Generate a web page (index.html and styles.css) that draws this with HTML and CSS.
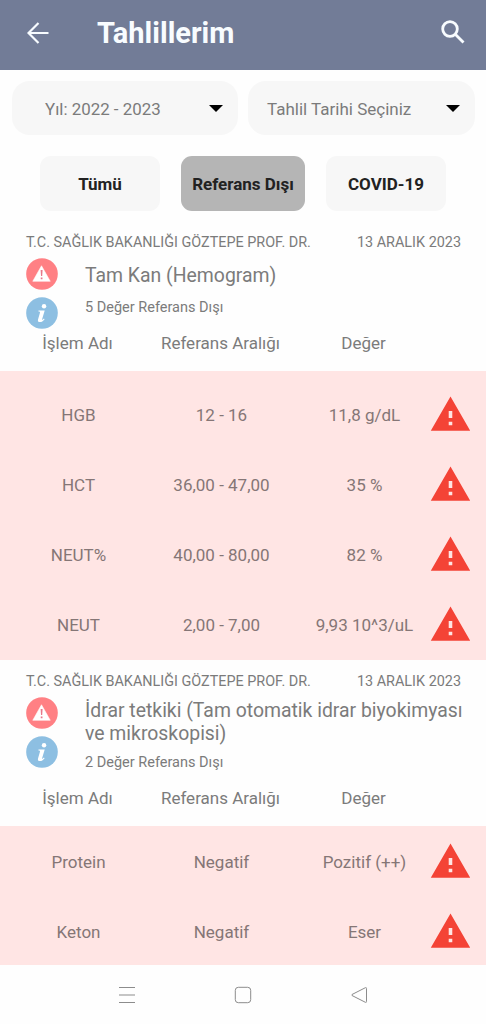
FILE: index.html
```html
<!DOCTYPE html>
<html lang="tr">
<head>
  <meta charset="UTF-8">
  <meta name="viewport" content="width=device-width, initial-scale=1.0">
  <title>Tahlillerim</title>
  <link rel="stylesheet" href="styles.css">
</head>
<body>
  <!-- shared icons -->
  <svg class="sprite" width="0" height="0">
    <symbol id="warning" viewBox="0 0 24 24">
      <path d="M1 21h22L12 2 1 21zm12-3h-2v-2h2v2zm0-4h-2v-4h2v4z"/>
    </symbol>
    <symbol id="badgeWarning" viewBox="0 0 33 33">
      <circle cx="16.5" cy="16.5" r="16.3" fill="#ff8084"/>
      <path d="M16 8 25 24H7z" fill="#fff" stroke="#fff" stroke-width=".6" stroke-linejoin="round"/>
      <path d="M15.1 12.5h2l-.4 6h-1.2zM15.2 20h1.8v1.8h-1.800z" fill="#e8788a"/>
    </symbol>
    <symbol id="badgeInfo" viewBox="0 0 33 33">
      <circle cx="16.5" cy="16.5" r="16.3" fill="#8dbfe2"/>
      <circle cx="18.6" cy="9.6" r="2.3" fill="#fff"/>
      <path d="M12.9 13.800h6.400l-2.700 9.200c-.2.9.5.8 1.9-.7l.7.6c-1.600 2.200-3.200 3-4.800 3-1.700 0-2.500-1-2-2.700l2-7c.2-.9-.3-1.200-1.600-1.300z" fill="#fff"/>
    </symbol>
  </svg>

  <header class="app-bar">
    <svg class="back" viewBox="0 0 22 22"><path d="M21.5 11H2M11.5 1 1.5 11l10 10"/></svg>
    <h1>Tahlillerim</h1>
    <svg class="search" viewBox="0 0 24 24"><circle cx="9" cy="9" r="7.3"/><path d="m14.5 14.5 8 8"/></svg>
  </header>

  <main>
    <div class="filters">
      <div class="select year"><span>Yıl: 2022 - 2023</span><i class="caret"></i></div>
      <div class="select date"><span>Tahlil Tarihi Seçiniz</span><i class="caret"></i></div>
    </div>

    <div class="tabs">
      <button class="tab">Tümü</button>
      <button class="tab active">Referans Dışı</button>
      <button class="tab">COVID-19</button>
    </div>

    <section class="report">
      <div class="report-top">
        <span class="hospital">T.C. SAĞLIK BAKANLIĞI GÖZTEPE PROF. DR.</span>
        <span class="day">13 ARALIK 2023</span>
      </div>
      <div class="report-info">
        <div class="badges">
          <svg><use href="#badgeWarning"/></svg>
          <svg><use href="#badgeInfo"/></svg>
        </div>
        <div class="report-text">
          <h2><span>Tam Kan (Hemogram)</span></h2>
          <p>5 Değer Referans Dışı</p>
        </div>
      </div>
      <div class="row head"><span>İşlem Adı</span><span>Referans Aralığı</span><span>Değer</span></div>
      <div class="rows">
        <div class="row"><span>HGB</span><span>12 - 16</span><span>11,8 g/dL</span><svg><use href="#warning"/></svg></div>
        <div class="row"><span>HCT</span><span>36,00 - 47,00</span><span>35 %</span><svg><use href="#warning"/></svg></div>
        <div class="row"><span>NEUT%</span><span>40,00 - 80,00</span><span>82 %</span><svg><use href="#warning"/></svg></div>
        <div class="row"><span>NEUT</span><span>2,00 - 7,00</span><span>9,93 10^3/uL</span><svg><use href="#warning"/></svg></div>
      </div>
    </section>

    <section class="report">
      <div class="report-top">
        <span class="hospital">T.C. SAĞLIK BAKANLIĞI GÖZTEPE PROF. DR.</span>
        <span class="day">13 ARALIK 2023</span>
      </div>
      <div class="report-info">
        <div class="badges">
          <svg><use href="#badgeWarning"/></svg>
          <svg><use href="#badgeInfo"/></svg>
        </div>
        <div class="report-text">
          <h2><span>İdrar tetkiki (Tam otomatik idrar biyokimyası<br>ve mikroskopisi)</span></h2>
          <p>2 Değer Referans Dışı</p>
        </div>
      </div>
      <div class="row head"><span>İşlem Adı</span><span>Referans Aralığı</span><span>Değer</span></div>
      <div class="rows last">
        <div class="row"><span>Protein</span><span>Negatif</span><span>Pozitif (++)</span><svg><use href="#warning"/></svg></div>
        <div class="row"><span>Keton</span><span>Negatif</span><span>Eser</span><svg><use href="#warning"/></svg></div>
      </div>
    </section>
  </main>

  <nav class="system-nav">
    <svg viewBox="0 0 18 18"><path d="M1 1.5h16M1 9h16M1 16.5h16"/></svg>
    <svg viewBox="0 0 18 18"><rect x="1.3" y="1.3" width="15.4" height="15.4" rx="3"/></svg>
    <svg viewBox="0 0 18 18"><path d="M15.4 1.7 2 8.5q-.9.5 0 1L15.4 16.3q1.1.4 1.1-.7V2.4q0-1.1-1.1-.7z"/></svg>
  </nav>
</body>
</html>
```

FILE: styles.css
```css
* {
  box-sizing: border-box;
}

body {
  margin: 0;
  height: 1024px;
  display: flex;
  flex-direction: column;
  overflow: hidden;
  background: #fefefe;
  color: #7b7b7b;
  font-family: Roboto, "Liberation Sans", sans-serif;
  font-size: 17px;
}

.sprite {
  position: absolute;
}

/* top bar */
.app-bar {
  flex: none;
  display: flex;
  align-items: center;
  height: 70px;
  padding: 0 21px 4px 27px;
  background: #727c97;
  color: #f8fcff;
}

.app-bar h1 {
  flex: 1;
  margin: 0 0 0 48px;
  font-size: 29px;
  font-weight: 700;
}

.app-bar svg {
  fill: none;
  stroke: #f8fcff;
}

.back {
  width: 22px;
  height: 22px;
  stroke-width: 2.2;
}

.search {
  width: 24px;
  height: 24px;
  margin-top: -2px;
  stroke-width: 2.8;
}

main {
  flex: none;
  height: 895px;
  overflow: hidden;
}

/* filters */
.filters {
  display: flex;
  gap: 10px;
  padding: 11px 11px 0 12px;
}

.select {
  display: flex;
  align-items: center;
  justify-content: space-between;
  height: 54px;
  border-radius: 18px;
  background: #f7f7f7;
}

.year {
  width: 226px;
  padding: 1px 15px 0 33px;
  font-size: 16.9px;
}

.date {
  width: 227px;
  padding: 1px 15px 0 19px;
}

.caret {
  border: 7px solid transparent;
  border-top-color: #000;
  border-bottom: 0;
}

.tabs {
  display: flex;
  gap: 21px;
  padding: 21px 40px 10px;
}

.tab {
  width: 120px;
  height: 55px;
  padding: 0;
  border: 0;
  border-radius: 11px;
  background: #f7f7f7;
  color: #222;
  font: 700 17px Roboto, "Liberation Sans", sans-serif;
}

.tab.active {
  width: 124px;
  background: #b5b5b5;
}

/* reports */
.report-top {
  display: flex;
  justify-content: space-between;
  height: 37px;
  padding: 0 25px 0 26px;
  font-size: 14.4px;
  line-height: 43px;
}

.report-info {
  display: flex;
  gap: 27px;
  padding-left: 26px;
}

.badges {
  display: flex;
  flex-direction: column;
  gap: 7px;
}

.badges svg {
  display: block;
  width: 32px;
  height: 32px;
}

.report-text {
  padding: 2px 0 15px;
}

.report-text h2 {
  display: flex;
  align-items: center;
  min-height: 30px;
  margin: 0;
  font-size: 19.4px;
  font-weight: 400;
  line-height: 23px;
  white-space: nowrap;
}

.report-text p {
  margin: 10px 0 0;
  font-size: 14.5px;
  line-height: 16px;
}

.row {
  display: flex;
  align-items: center;
  height: 70px;
  padding-left: 7px;
}

.row span {
  width: 143px;
  text-align: center;
  white-space: nowrap;
}

.row svg {
  width: 43px;
  height: 43px;
  margin: -2px 0 0 -7px;
  fill: #f44336;
}

.row.head {
  height: 40px;
  padding: 0 0 17px 6px;
}

.rows {
  padding-top: 9px;
  background: #ffe5e4;
  color: #857676;
}

.rows.last {
  padding-top: 1px;
}

/* phone navigation */
.system-nav {
  flex: 1;
  display: flex;
  justify-content: center;
  align-items: center;
  gap: 98px;
}

.system-nav svg {
  width: 18px;
  height: 18px;
  fill: none;
  stroke: #8c8c8c;
}
```
